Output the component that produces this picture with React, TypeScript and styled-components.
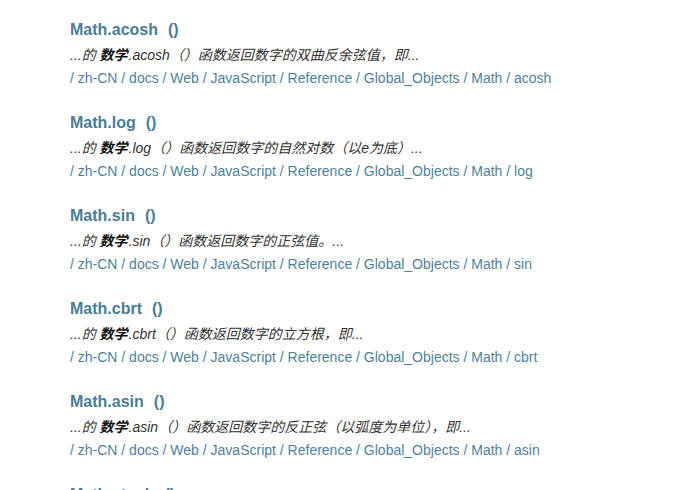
import styled, { createGlobalStyle } from "styled-components";

const GlobalStyle = createGlobalStyle`
  html, body {
    margin: 0;
    padding: 0;
    background: #ffffff;
  }
  body {
    font-family: "Liberation Sans", Arial, "Noto Sans CJK SC", sans-serif;
  }
`;

interface Result {
  name: string;
  desc: string;
}

const results: Result[] = [
  { name: "acosh", desc: "函数返回数字的双曲反余弦值，即..." },
  { name: "log", desc: "函数返回数字的自然对数（以e为底）..." },
  { name: "sin", desc: "函数返回数字的正弦值。..." },
  { name: "cbrt", desc: "函数返回数字的立方根，即..." },
  { name: "asin", desc: "函数返回数字的反正弦（以弧度为单位），即..." },
  { name: "atanh", desc: "函数返回数字的双曲反正切值，即..." },
];

const crumbs = ["zh-CN", "docs", "Web", "JavaScript", "Reference", "Global_Objects", "Math"];

const Page = styled.div`
  height: 490px;
  overflow: hidden;
  padding: 18px 0 0 70px;
  box-sizing: border-box;
`;

const List = styled.ul`
  list-style: none;
  margin: 0;
  padding: 0;
`;

const Item = styled.li`
  margin-bottom: 21px;
`;

const Title = styled.a`
  display: block;
  font-size: 16px;
  line-height: 24px;
  font-weight: bold;
  color: #497d96;
  text-decoration: none;
`;

const Parens = styled.span`
  margin-left: 10px;
`;

const Desc = styled.p`
  margin: 1px 0 0;
  font-size: 14px;
  line-height: 24px;
  font-style: italic;
  color: #333333;
`;

const Strong = styled.b`
  color: #111111;
  margin-right: 1px;
`;

const Path = styled.div`
  font-size: 14px;
  line-height: 23px;
  color: #4f8299;
`;

export default function App() {
  return (
    <>
      <GlobalStyle />
      <Page>
        <List>
          {results.map((r) => (
            <Item key={r.name}>
              <Title href="#">
                Math.{r.name}
                <Parens>()</Parens>
              </Title>
              <Desc>
                ...的 <Strong>数学</Strong>.{r.name}（）{r.desc}
              </Desc>
              <Path>
                / {crumbs.join(" / ")} / {r.name}
              </Path>
            </Item>
          ))}
        </List>
      </Page>
    </>
  );
}
